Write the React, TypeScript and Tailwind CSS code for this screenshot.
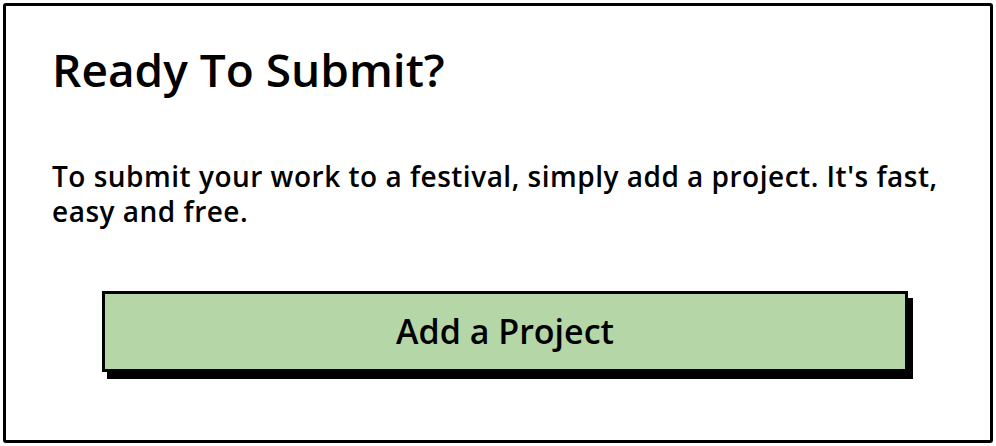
import React from 'react';

const App: React.FC = () => {
  return (
    <div className="w-[996px] h-[446px] bg-white p-[3px] font-['Open_Sans','Noto_Sans',sans-serif] text-black">
      <div className="h-full border-[3px] border-black rounded-[3px] pl-[46px] pr-[30px] pt-[35px]">
        <h1 className="text-[46px] leading-[56px] font-semibold">Ready To Submit?</h1>

        <p className="mt-[62px] text-[28px] leading-[35px] font-semibold tracking-[0.5px]">
          To submit your work to a festival, simply add a project. It's fast, easy and free.
        </p>

        <div className="mt-[62px] ml-[50px]">
          <button className="w-[806px] h-[81px] bg-[#b5d7a8] border-[3px] border-black shadow-[5px_7px_0_0_#000] text-[34px] font-semibold">
            Add a Project
          </button>
        </div>
      </div>
    </div>
  );
};

export default App;
